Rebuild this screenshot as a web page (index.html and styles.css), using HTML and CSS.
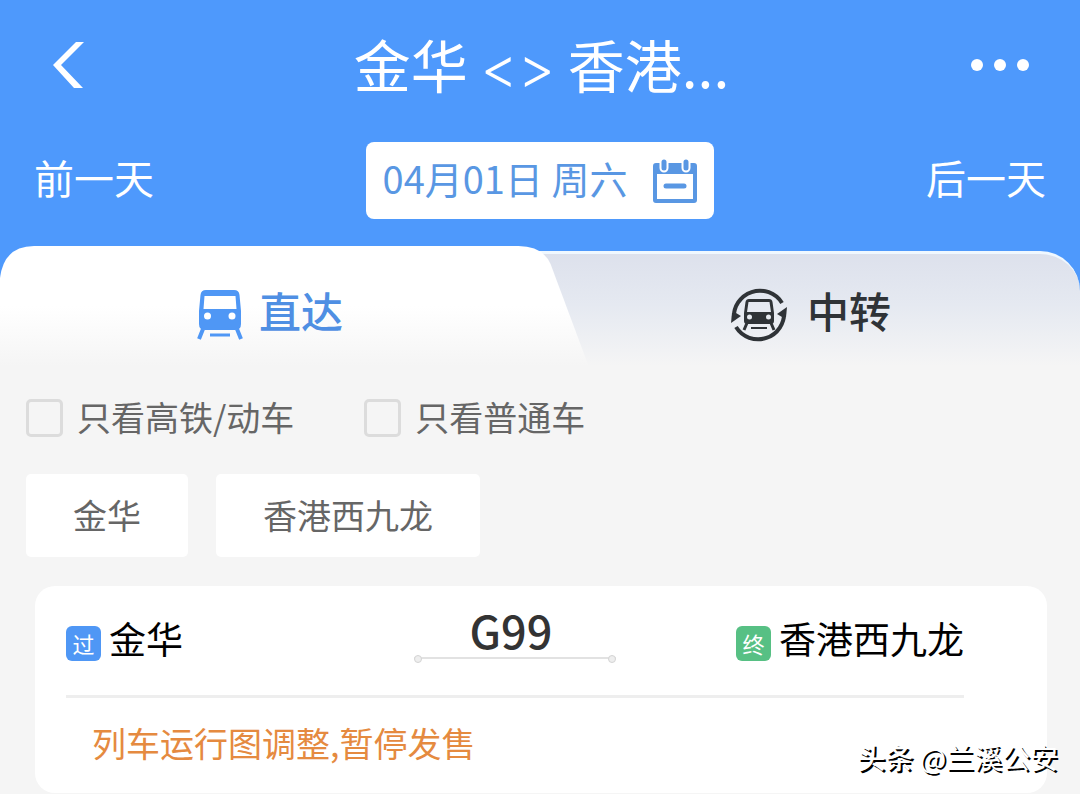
FILE: index.html
```html
<!DOCTYPE html>
<html lang="zh-CN">
<head>
    <meta charset="UTF-8">
    <meta name="viewport" content="width=device-width, initial-scale=1.0">
    <title>金华 - 香港西九龙</title>
    <link rel="stylesheet" href="styles.css">
</head>
<body>
    <header class="header">
        <div class="title-bar">
            <button class="icon-btn" aria-label="返回">
                <svg width="32" height="48" viewBox="0 0 32 48">
                    <path d="M24 1H32L9 24L31 47H22L1 24Z" fill="#fff"/>
                </svg>
            </button>
            <h1>金华 <span class="arrows">&lt;&gt;</span> 香港...</h1>
            <button class="icon-btn" aria-label="更多">
                <svg width="60" height="12" viewBox="0 0 60 12" fill="#fff">
                    <circle cx="6" cy="6" r="6"/>
                    <circle cx="29" cy="6" r="6"/>
                    <circle cx="52" cy="6" r="6"/>
                </svg>
            </button>
        </div>
        <div class="date-bar">
            <button class="day-btn">前一天</button>
            <button class="date-btn">
                <span>04月01日 周六</span>
                <svg width="44" height="44" viewBox="0 0 44 44">
                    <path fill-rule="evenodd" d="M3 4H41Q44 4 44 7V41Q44 44 41 44H3Q0 44 0 41V7Q0 4 3 4ZM4 15V40H40V15Z" fill="#5997e3"/>
                    <path d="M11 3V9M33 3V9" stroke="#fff" stroke-width="9" stroke-linecap="round"/>
                    <path d="M11 3V9M33 3V9" stroke="#5997e3" stroke-width="5" stroke-linecap="round"/>
                    <path d="M13 27H31" stroke="#5997e3" stroke-width="5" stroke-linecap="round"/>
                </svg>
            </button>
            <button class="day-btn">后一天</button>
        </div>
    </header>

    <nav class="tabs">
        <button class="tab active">
            <svg class="tab-shape" viewBox="0 0 588 120" preserveAspectRatio="none">
                <defs>
                    <linearGradient id="fade" x1="0" y1="0" x2="0" y2="1">
                        <stop offset="0.5" stop-color="#fff"/>
                        <stop offset="1" stop-color="#f5f5f5"/>
                    </linearGradient>
                </defs>
                <path d="M0 32Q4 0 34 0H518Q542 0 550 18L588 120H0Z" fill="url(#fade)"/>
            </svg>
            <svg class="train-icon" width="46" height="52" viewBox="0 0 46 52">
                <path fill-rule="evenodd" d="M9 1H37Q42 1 42.500 6L44 22V35Q44 41 38 41H8Q2 41 2 35V22L3.500 6Q4 1 9 1ZM7.500 7L6.500 20H39.500L38.500 7Z" fill="#4f97f5"/>
                <circle cx="10.500" cy="27" r="3.500" fill="#fff"/>
                <circle cx="35" cy="27" r="3.500" fill="#fff"/>
                <path d="M6 40L2 50M40 40L44 50" stroke="#4f97f5" stroke-width="4"/>
                <path d="M13 46H33" stroke="#4f97f5" stroke-width="3"/>
            </svg>
            <span>直达</span>
        </button>
        <button class="tab">
            <svg class="transfer-icon" width="60" height="60" viewBox="0 0 60 60" fill="none" stroke="#2f3337">
                <path d="M5 34A26 26 0 0 1 53 18" stroke-width="4"/>
                <path d="M55 26A26 26 0 0 1 7 42" stroke-width="4"/>
                <path d="M2 38L3 28H7L12 31Z" fill="#2f3337" stroke="none"/>
                <path d="M58 22L57 32H53L48 29Z" fill="#2f3337" stroke="none"/>
                <path fill-rule="evenodd" d="M20 14H40Q43 14 43.500 17L45 28V36Q45 39 42 39H18Q15 39 15 36V28L16.500 17Q17 14 20 14ZM19.500 17L18 27H42L40.500 17Z" fill="#2f3337" stroke="none"/>
                <circle cx="20.500" cy="32" r="2.500" fill="#e6eaf0" stroke="none"/>
                <circle cx="39.500" cy="32" r="2.500" fill="#e6eaf0" stroke="none"/>
                <path d="M18 38L15 45M42 38L45 45" stroke-width="3"/>
                <path d="M22 43H38" stroke-width="2"/>
            </svg>
            <span>中转</span>
        </button>
    </nav>

    <main class="content">
        <div class="filters">
            <label class="filter"><input type="checkbox"><span>只看高铁/动车</span></label>
            <label class="filter"><input type="checkbox"><span>只看普通车</span></label>
        </div>

        <div class="stations">
            <button class="station-btn">金华</button>
            <button class="station-btn">香港西九龙</button>
        </div>

        <section class="card">
            <div class="route">
                <div class="stop">
                    <span class="badge pass">过</span>
                    <span>金华</span>
                </div>
                <div class="train">
                    <span class="train-no">G99</span>
                    <div class="train-line"></div>
                </div>
                <div class="stop end">
                    <span class="badge last">终</span>
                    <span>香港西九龙</span>
                </div>
            </div>
            <p class="notice">列车运行图调整,暂停发售</p>
        </section>
    </main>

    <div class="watermark"><b>头条</b> @兰溪公安</div>
</body>
</html>
```

FILE: styles.css
```css
* {
    box-sizing: border-box;
    margin: 0;
    padding: 0;
}

body {
    position: relative;
    background: #f5f5f5;
    font-family: "Noto Sans CJK SC", sans-serif;
    color: #000;
}

button {
    border: none;
    background: none;
    font-family: inherit;
    color: inherit;
    cursor: pointer;
}

svg {
    display: block;
    flex-shrink: 0;
}

/* header */
.header {
    background: #4e99fc;
    color: #fff;
    padding-bottom: 27px;
}

.title-bar {
    display: flex;
    justify-content: space-between;
    align-items: center;
    height: 130px;
    padding: 0 49px 0 52px;
}

.title-bar h1 {
    font-size: 57px;
    font-weight: 400;
    line-height: 80px;
}

.arrows {
    font-family: Inter, sans-serif;
    font-weight: 300;
}

.icon-btn {
    width: 60px;
}

.date-bar {
    display: flex;
    justify-content: space-between;
    align-items: center;
    padding: 12px 34px 0;
}

.day-btn {
    padding-bottom: 8px;
    font-size: 40px;
    line-height: 60px;
}

.date-btn {
    display: flex;
    align-items: center;
    gap: 26px;
    height: 77px;
    padding: 0 17px;
    border-radius: 8px;
    background: #fff;
    color: #5997e3;
    font-size: 38px;
    line-height: 56px;
}

.date-btn span {
    padding-bottom: 6px;
}

/* tabs */
.tabs {
    position: relative;
    display: flex;
    height: 120px;
    background: #4e99fc;
}

.tabs::before {
    content: "";
    position: absolute;
    inset: 5px 0 0;
    border-top: 3px solid #f0f8ff;
    border-radius: 40px 40px 0 0;
    background: linear-gradient(#dde1ec, #e5e9f1 45%, #f5f5f5);
}

.tab {
    position: relative;
    flex: 1;
    display: flex;
    justify-content: center;
    align-items: center;
    gap: 18px;
    color: #2f3337;
    font-size: 42px;
    font-weight: 500;
    line-height: 60px;
}

.tab.active {
    z-index: 1;
    gap: 16px;
    color: #4f8fe3;
}

.tab-shape {
    position: absolute;
    top: 0;
    left: 0;
    width: 109%;
    height: 100%;
}

.tab span,
.train-icon,
.transfer-icon {
    position: relative;
}

.train-icon,
.transfer-icon {
    margin-top: 18px;
}

.tab span {
    margin-top: 8px;
}

/* list */
.content {
    padding: 21px 26px 1px;
}

.filters {
    display: flex;
    gap: 70px;
}

.filter {
    display: flex;
    align-items: center;
    gap: 14px;
    color: #666;
    font-size: 34px;
    line-height: 60px;
}

.filter span,
.station-btn {
    padding-bottom: 2px;
}

.filter input {
    appearance: none;
    width: 37px;
    height: 38px;
    border: 3px solid #dcdcdc;
    border-radius: 5px;
}

.stations {
    display: flex;
    gap: 28px;
    margin-top: 25px;
}

.station-btn {
    height: 83px;
    padding-left: 47px;
    padding-right: 47px;
    border-radius: 5px;
    background: #fff;
    color: #666;
    font-size: 34px;
}

.card {
    margin: 29px 7px 0 9px;
    padding: 16px 83px 20px 31px;
    border-radius: 20px;
    background: #fff;
}

.route {
    display: grid;
    grid-template-columns: 1fr auto 1fr;
    height: 96px;
    border-bottom: 3px solid #eee;
}

.stop {
    display: flex;
    align-items: center;
    gap: 8px;
    height: 72px;
    font-size: 37px;
    line-height: 54px;
}

.end {
    justify-content: flex-end;
}

.badge {
    width: 35px;
    height: 35px;
    margin-top: 10px;
    border-radius: 6px;
    color: #fff;
    font-size: 22px;
    line-height: 34px;
    text-align: center;
}

.pass {
    background: #4f97f5;
}

.last {
    background: #57c084;
}

.train {
    width: 202px;
    text-align: center;
}

.train-no {
    display: block;
    padding-right: 8px;
    color: #333;
    font-size: 45px;
    font-weight: 500;
    line-height: 55px;
}

.train-line {
    position: relative;
    height: 2px;
    background: #e2e2e2;
}

.train-line::before,
.train-line::after {
    content: "";
    position: absolute;
    top: -2px;
    left: 0;
    width: 6px;
    height: 6px;
    border: 1px solid #d4d4d4;
    border-radius: 50%;
    background: #eee;
}

.train-line::after {
    left: auto;
    right: 0;
}

.notice {
    padding: 15px 26px 0;
    color: #e58a40;
    font-size: 34px;
    line-height: 60px;
}

.watermark {
    position: absolute;
    right: 22px;
    bottom: 17px;
    color: #fff;
    font-size: 28px;
    line-height: 40px;
    text-shadow: 2px 2px 0 #000;
}

.watermark b {
    font-weight: 500;
}
```
